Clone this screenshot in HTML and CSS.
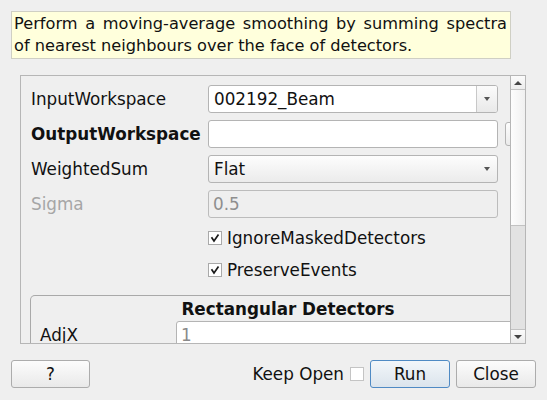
FILE: index.html
```html
<!DOCTYPE html>
<html>
<head>
<meta charset="utf-8">
<link rel="stylesheet" href="styles.css">
</head>
<body>
<div class="desc"><span class="dline first">Perform a moving-average smoothing by summing spectra</span><span class="dline">of nearest neighbours over the face of detectors.</span></div>

<div class="scroll">
  <div class="viewport">
    <div class="row">
      <div class="label">InputWorkspace</div>
      <div class="combo editable">
        <span class="ctext">002192_Beam</span>
        <span class="cbtn"><span class="arrow"></span></span>
      </div>
    </div>
    <div class="row">
      <div class="label bold">OutputWorkspace</div>
      <div class="field"></div>
      <div class="browse"></div>
    </div>
    <div class="row">
      <div class="label">WeightedSum</div>
      <div class="combo plain">
        <span class="ctext">Flat</span>
        <span class="cbtn plainbtn"><span class="arrow"></span></span>
      </div>
    </div>
    <div class="row">
      <div class="label disabled">Sigma</div>
      <div class="field off">0.5</div>
    </div>
    <div class="row check">
      <div class="label"></div>
      <span class="cb"><svg width="10" height="10" viewBox="0 0 10 10"><path d="M1.5 4.2 L4 8 L8.5 1.5" fill="none" stroke="#1a1a1a" stroke-width="1.7"/></svg></span>
      <span class="cbtext">IgnoreMaskedDetectors</span>
    </div>
    <div class="row check">
      <div class="label"></div>
      <span class="cb"><svg width="10" height="10" viewBox="0 0 10 10"><path d="M1.5 4.2 L4 8 L8.5 1.5" fill="none" stroke="#1a1a1a" stroke-width="1.7"/></svg></span>
      <span class="cbtext">PreserveEvents</span>
    </div>
    <div class="group">
      <div class="gtitle">Rectangular Detectors</div>
      <div class="grow">
        <div class="glabel">AdjX</div>
        <div class="field gfield"><span class="ph">1</span></div>
      </div>
    </div>
  </div>
  <div class="vscroll">
    <div class="sbtn"><span class="up"></span></div>
    <div class="handle"></div>
    <div class="track"></div>
    <div class="sbtn bottom"><span class="down"></span></div>
  </div>
</div>

<div class="bar">
  <button class="btn help">?</button>
  <div class="spacer"></div>
  <span class="keep">Keep Open</span>
  <span class="cb keepcb"></span>
  <button class="btn run">Run</button>
  <button class="btn close">Close</button>
</div>
</body>
</html>
```

FILE: styles.css
```css
html, body {
  margin: 0;
  padding: 0;
  background: #efefef;
  font-family: "DejaVu Sans", "Liberation Sans", sans-serif;
  font-size: 16.8px;
  color: #111;
}

body {
  width: 547px;
  height: 400px;
  overflow: hidden;
  padding-top: 11px;
  box-sizing: border-box;
}

.desc {
  margin-left: 11px;
  width: 500px;
  height: 48px;
  box-sizing: border-box;
  background: #ffffdc;
  border: 1px solid #cfcfc4;
  padding: 1px 3px 0 2px;
  font-size: 16.2px;
  line-height: 22px;
  color: #111;
  white-space: nowrap;
}

.dline {
  display: block;
  overflow: hidden;
}

.dline.first {
  text-align: justify;
  text-align-last: justify;
}

.scroll {
  display: flex;
  margin: 16px 0 0 20px;
  width: 506px;
  height: 269px;
  box-sizing: border-box;
  border: 1px solid #b6b6b6;
}

.viewport {
  flex: 1;
  overflow: hidden;
  padding-top: 9px;
  min-width: 0;
}

.row {
  display: flex;
  align-items: center;
  height: 28px;
  margin-bottom: 7px;
  padding-left: 10px;
}

.row.check {
  height: 26px;
  margin-bottom: 6px;
}

.label {
  width: 177px;
  flex: none;
  white-space: nowrap;
}

.bold { font-weight: bold; }
.disabled { color: #a6a6a6; }

.combo, .field {
  width: 290px;
  height: 28px;
  flex: none;
  box-sizing: border-box;
  border: 1px solid #b4b4b4;
  border-radius: 3px;
  display: flex;
  align-items: center;
}

.combo.editable {
  background: #fff;
}

.combo.plain {
  background: linear-gradient(#fdfdfd, #ebebeb);
}

.ctext {
  flex: 1;
  padding-left: 5px;
}

.cbtn {
  width: 20px;
  height: 100%;
  border-left: 1px solid #c8c8c8;
  background: linear-gradient(#fbfbfb, #e9e9e9);
  display: flex;
  align-items: center;
  justify-content: center;
  border-radius: 0 2px 2px 0;
}

.cbtn.plainbtn {
  border-left: none;
  background: transparent;
}

.arrow {
  width: 0;
  height: 0;
  border-left: 3.5px solid transparent;
  border-right: 3.5px solid transparent;
  border-top: 4px solid #555;
}

.field {
  background: #fff;
  padding-left: 4px;
}

.field.off {
  background: #efefef;
  color: #8e8e8e;
  border-color: #bcbcbc;
}

.browse {
  flex: none;
  margin-left: 7px;
  width: 30px;
  height: 24px;
  box-sizing: border-box;
  border: 1px solid #b4b4b4;
  border-radius: 3px;
  background: linear-gradient(#fdfdfd, #ebebeb);
}

.cb {
  width: 14px;
  height: 14px;
  flex: none;
  box-sizing: border-box;
  border: 1px solid #a9a9a9;
  background: #fff;
  display: flex;
  align-items: center;
  justify-content: center;
}

.cbtext {
  margin-left: 5px;
}

.group {
  margin: 12px 0 0 9px;
  width: 514px;
  border: 1px solid #a9a9a9;
  border-bottom: none;
  border-radius: 5px 5px 0 0;
  padding-top: 3px;
}

.gtitle {
  font-weight: bold;
  text-align: center;
  line-height: 20px;
  height: 20px;
}

.grow {
  display: flex;
  align-items: center;
  margin-top: 2px;
  padding-left: 9px;
}

.glabel {
  width: 136px;
  flex: none;
}

.gfield {
  width: 340px;
}

.ph {
  color: #8a8a8a;
}

.vscroll {
  width: 14px;
  flex: none;
  border-left: 1px solid #b6b6b6;
  display: flex;
  flex-direction: column;
  background: #e2e2e2;
}

.sbtn {
  height: 13px;
  flex: none;
  background: linear-gradient(#fbfbfb, #ececec);
  border-bottom: 1px solid #c2c2c2;
  display: flex;
  align-items: center;
  justify-content: center;
}

.sbtn.bottom {
  border-bottom: none;
  border-top: 1px solid #c2c2c2;
}

.up {
  width: 0;
  height: 0;
  border-left: 4px solid transparent;
  border-right: 4px solid transparent;
  border-bottom: 4px solid #444;
}

.down {
  width: 0;
  height: 0;
  border-left: 4px solid transparent;
  border-right: 4px solid transparent;
  border-top: 4px solid #444;
}

.handle {
  height: 136px;
  flex: none;
  box-sizing: border-box;
  background: linear-gradient(90deg, #fdfdfd, #f0f0f0);
  border-bottom: 1px solid #c2c2c2;
}

.track {
  flex: 1;
  background: #e2e2e2;
}

.bar {
  display: flex;
  align-items: center;
  margin-top: 16px;
  padding: 0 11px;
}

.spacer { flex: 1; }

.btn {
  height: 28px;
  width: 80px;
  box-sizing: border-box;
  border: 1px solid #acacac;
  border-radius: 3px;
  background: linear-gradient(#fcfcfc, #e9e9e9);
  font-family: "DejaVu Sans", "Liberation Sans", sans-serif;
  font-size: 16.8px;
  color: #111;
  padding: 0;
  margin: 0;
}

.btn.help {
  width: 79px;
}

.keep {
  margin-right: 6px;
}

.keepcb {
  border-color: #c4c4c4;
}

.btn.run {
  margin-left: 6px;
  border-color: #4f8ac4;
  background: linear-gradient(#f2f6fa, #dbe4ec);
}

.btn.close {
  margin-left: 6px;
}
```
